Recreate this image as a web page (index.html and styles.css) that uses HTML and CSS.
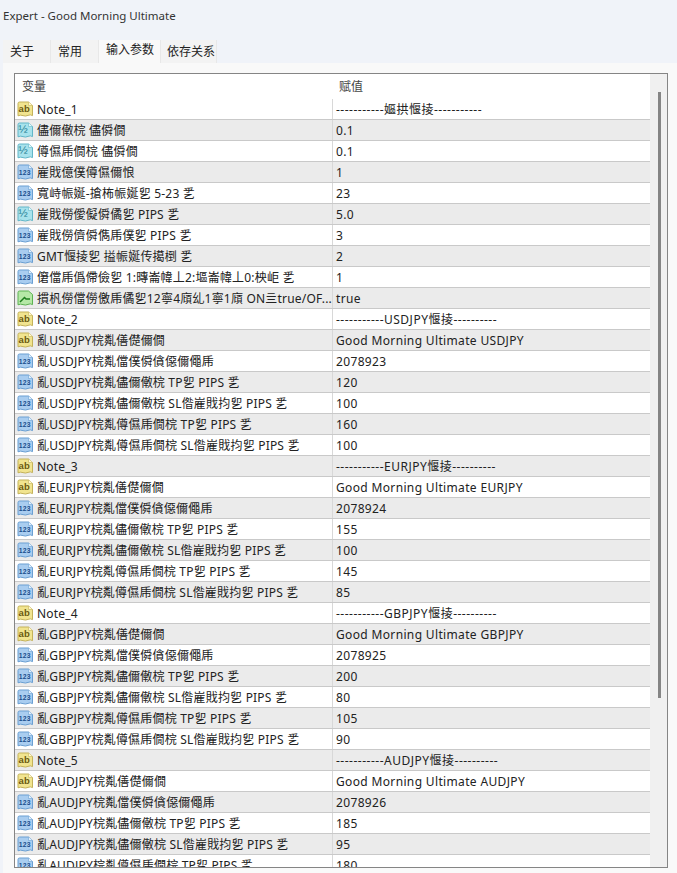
FILE: index.html
```html
<!DOCTYPE html>
<html lang="zh-CN">
<head>
<meta charset="utf-8">
<title>Expert - Good Morning Ultimate</title>
<link rel="stylesheet" href="styles.css">
</head>
<body>
<svg class="defs" width="0" height="0" aria-hidden="true">
  <defs>
    <path id="page" d="M1 2.5Q1 1 2.5 1H11.5L15.5 4.5V14.6Q13.5 13.2 11 14.4T6 14.6T1 14.8Z"/>
    <symbol id="i-ab" viewBox="0 0 17 17"><use href="#page" fill="#f1e48f" stroke="#c4b25a"/><path d="M11.5 1V4.5H15.5" fill="#fff8d0" stroke="#c4b25a" stroke-width=".6"/><text x="1.6" y="11.4" class="ic ic-ab">ab</text></symbol>
    <symbol id="i-d" viewBox="0 0 17 17"><use href="#page" fill="#a8e2ec" stroke="#62b6c8"/><path d="M11.5 1V4.5H15.5" fill="#e4f8fb" stroke="#62b6c8" stroke-width=".6"/><text x="1.6" y="11.2" class="ic ic-d">½</text></symbol>
    <symbol id="i-n" viewBox="0 0 17 17"><use href="#page" fill="#a9cdf0" stroke="#6a9fd2"/><path d="M11.5 1V4.5H15.5" fill="#e2f0fc" stroke="#6a9fd2" stroke-width=".6"/><text x="1.7" y="10.8" class="ic ic-n">123</text></symbol>
    <symbol id="i-b" viewBox="0 0 17 17"><use href="#page" fill="#b5e8a6" stroke="#5db252"/><path d="M3 12L7.5 7.5L9 9H13" fill="none" stroke="#1d7d1d" stroke-width="1.5"/></symbol>
  </defs>
</svg>
<div class="window">
  <div class="title">Expert - Good Morning Ultimate</div>
  <nav class="tabs">
    <span class="tab tab-a">关于</span>
    <span class="tab tab-b">常用</span>
    <span class="tab tab-active">输入参数</span>
    <span class="tab tab-d">依存关系</span>
  </nav>
  <main class="pane">
    <section class="table">
      <div class="grid">
        <div class="head"><span>变量</span><span>赋值</span></div>

        <div class="row"><span class="name"><svg class="icon"><use href="#i-ab"/></svg>Note_1</span><span class="val sep">-----------嫗拱愝掕-----------</span></div>
        <div class="row"><span class="name"><svg class="icon"><use href="#i-d"/></svg>儘儞僌梡 儘僢僩</span><span class="val">0.1</span></div>
        <div class="row"><span class="name"><svg class="icon"><use href="#i-d"/></svg>僔儑乕僩梡 儘僢僩</span><span class="val">0.1</span></div>
        <div class="row"><span class="name"><svg class="icon"><use href="#i-n"/></svg>嵟戝億僕僔儑儞悢</span><span class="val">1</span></div>
        <div class="row"><span class="name"><svg class="icon"><use href="#i-n"/></svg>寬峙帪娫-搶柨帪娫乮 5-23 乯</span><span class="val">23</span></div>
        <div class="row"><span class="name"><svg class="icon"><use href="#i-d"/></svg>嵟戝僗僾儗僢僪乮 PIPS 乯</span><span class="val">5.0</span></div>
        <div class="row"><span class="name"><svg class="icon"><use href="#i-n"/></svg>嵟戝僗儕僢儁乕僕乮 PIPS 乯</span><span class="val">3</span></div>
        <div class="row"><span class="name"><svg class="icon"><use href="#i-n"/></svg>GMT愝掕乮 搤帪娫传擖椡 乯</span><span class="val">2</span></div>
        <div class="row"><span class="name"><svg class="icon"><use href="#i-n"/></svg>僒儅乕僞僀儉乮 1:暷崙幃丄2:塸崙幃丄0:柍岠 乯</span><span class="val">1</span></div>
        <div class="row"><span class="name"><svg class="icon"><use href="#i-b"/></svg>摜杋僗儅僗儌乕僪乮12寧4廎乣1寧1廎 ON亖true/OF...</span><span class="val">true</span></div>

        <div class="row"><span class="name"><svg class="icon"><use href="#i-ab"/></svg>Note_2</span><span class="val sep">-----------USDJPY愝掕----------</span></div>
        <div class="row"><span class="name"><svg class="icon"><use href="#i-ab"/></svg>亂USDJPY梡亃僐儊儞僩</span><span class="val">Good Morning Ultimate USDJPY</span></div>
        <div class="row"><span class="name"><svg class="icon"><use href="#i-n"/></svg>亂USDJPY梡亃儅僕僢僋僫儞僶乕</span><span class="val">2078923</span></div>
        <div class="row"><span class="name"><svg class="icon"><use href="#i-n"/></svg>亂USDJPY梡亃儘儞僌梡 TP乮 PIPS 乯</span><span class="val">120</span></div>
        <div class="row"><span class="name"><svg class="icon"><use href="#i-n"/></svg>亂USDJPY梡亃儘儞僌梡 SL偺嵟戝抣乮 PIPS 乯</span><span class="val">100</span></div>
        <div class="row"><span class="name"><svg class="icon"><use href="#i-n"/></svg>亂USDJPY梡亃僔儑乕僩梡 TP乮 PIPS 乯</span><span class="val">160</span></div>
        <div class="row"><span class="name"><svg class="icon"><use href="#i-n"/></svg>亂USDJPY梡亃僔儑乕僩梡 SL偺嵟戝抣乮 PIPS 乯</span><span class="val">100</span></div>

        <div class="row"><span class="name"><svg class="icon"><use href="#i-ab"/></svg>Note_3</span><span class="val sep">-----------EURJPY愝掕----------</span></div>
        <div class="row"><span class="name"><svg class="icon"><use href="#i-ab"/></svg>亂EURJPY梡亃僐儊儞僩</span><span class="val">Good Morning Ultimate EURJPY</span></div>
        <div class="row"><span class="name"><svg class="icon"><use href="#i-n"/></svg>亂EURJPY梡亃儅僕僢僋僫儞僶乕</span><span class="val">2078924</span></div>
        <div class="row"><span class="name"><svg class="icon"><use href="#i-n"/></svg>亂EURJPY梡亃儘儞僌梡 TP乮 PIPS 乯</span><span class="val">155</span></div>
        <div class="row"><span class="name"><svg class="icon"><use href="#i-n"/></svg>亂EURJPY梡亃儘儞僌梡 SL偺嵟戝抣乮 PIPS 乯</span><span class="val">100</span></div>
        <div class="row"><span class="name"><svg class="icon"><use href="#i-n"/></svg>亂EURJPY梡亃僔儑乕僩梡 TP乮 PIPS 乯</span><span class="val">145</span></div>
        <div class="row"><span class="name"><svg class="icon"><use href="#i-n"/></svg>亂EURJPY梡亃僔儑乕僩梡 SL偺嵟戝抣乮 PIPS 乯</span><span class="val">85</span></div>

        <div class="row"><span class="name"><svg class="icon"><use href="#i-ab"/></svg>Note_4</span><span class="val sep">-----------GBPJPY愝掕----------</span></div>
        <div class="row"><span class="name"><svg class="icon"><use href="#i-ab"/></svg>亂GBPJPY梡亃僐儊儞僩</span><span class="val">Good Morning Ultimate GBPJPY</span></div>
        <div class="row"><span class="name"><svg class="icon"><use href="#i-n"/></svg>亂GBPJPY梡亃儅僕僢僋僫儞僶乕</span><span class="val">2078925</span></div>
        <div class="row"><span class="name"><svg class="icon"><use href="#i-n"/></svg>亂GBPJPY梡亃儘儞僌梡 TP乮 PIPS 乯</span><span class="val">200</span></div>
        <div class="row"><span class="name"><svg class="icon"><use href="#i-n"/></svg>亂GBPJPY梡亃儘儞僌梡 SL偺嵟戝抣乮 PIPS 乯</span><span class="val">80</span></div>
        <div class="row"><span class="name"><svg class="icon"><use href="#i-n"/></svg>亂GBPJPY梡亃僔儑乕僩梡 TP乮 PIPS 乯</span><span class="val">105</span></div>
        <div class="row"><span class="name"><svg class="icon"><use href="#i-n"/></svg>亂GBPJPY梡亃僔儑乕僩梡 SL偺嵟戝抣乮 PIPS 乯</span><span class="val">90</span></div>

        <div class="row"><span class="name"><svg class="icon"><use href="#i-ab"/></svg>Note_5</span><span class="val sep">-----------AUDJPY愝掕----------</span></div>
        <div class="row"><span class="name"><svg class="icon"><use href="#i-ab"/></svg>亂AUDJPY梡亃僐儊儞僩</span><span class="val">Good Morning Ultimate AUDJPY</span></div>
        <div class="row"><span class="name"><svg class="icon"><use href="#i-n"/></svg>亂AUDJPY梡亃儅僕僢僋僫儞僶乕</span><span class="val">2078926</span></div>
        <div class="row"><span class="name"><svg class="icon"><use href="#i-n"/></svg>亂AUDJPY梡亃儘儞僌梡 TP乮 PIPS 乯</span><span class="val">185</span></div>
        <div class="row"><span class="name"><svg class="icon"><use href="#i-n"/></svg>亂AUDJPY梡亃儘儞僌梡 SL偺嵟戝抣乮 PIPS 乯</span><span class="val">95</span></div>
        <div class="row"><span class="name"><svg class="icon"><use href="#i-n"/></svg>亂AUDJPY梡亃僔儑乕僩梡 TP乮 PIPS 乯</span><span class="val">180</span></div>
      </div>
      <div class="scroll"><div class="thumb"></div></div>
    </section>
  </main>
</div>
</body>
</html>
```
FILE: styles.css
```css
* { box-sizing: border-box; }
html, body { margin: 0; height: 100%; overflow: hidden; }
body {
  background: #f0f3f9;
  color: #222;
  font: 12px/1 "Noto Sans", "Noto Sans CJK SC", sans-serif;
}
.defs { position: absolute; }
.window { display: flex; flex-direction: column; height: 873px; }
.title { height: 40px; padding: 9px 0 0 3px; font-size: 11.5px; line-height: 14px; color: #333; }
.tabs { display: flex; height: 23px; padding-left: 3px; font-size: 12px; }
.tab { display: flex; align-items: center; height: 23px; background: #f3f3f3; border-right: 1px solid #e8e8e8; }
.tab-a { width: 48px; padding-left: 7px; }
.tab-b { width: 48px; padding-left: 7px; }
.tab-active { width: 62px; padding-left: 7px; background: #f9f9f9; padding-bottom: 3px; }
.tab-d { width: 56px; padding-left: 6px; }
.pane { flex: 1; margin-left: 3px; padding: 10px 9px 5px 11px; background: #f9f9f9; }
.table { display: flex; height: 795px; border: 1px solid #858585; background: #fff; overflow: hidden; }
.grid { width: 635px; flex: none; }
.head { display: grid; grid-template-columns: 318px 317px; height: 25px; align-items: center; color: #444; }
.head span { padding-left: 7px; }
.head span + span { padding-left: 6px; }
.row { display: grid; grid-template-columns: 318px 317px; height: 21px; border-bottom: 1px solid #c9c9c9; }
.row:nth-child(odd) { background: #ebebeb; }
.name, .val { display: flex; align-items: center; padding-top: 1px; white-space: nowrap; overflow: hidden; }
.name { padding-left: 2px; border-right: 1px solid #d8d8d8; letter-spacing: .2px; }
.val { padding-left: 3px; letter-spacing: .35px; }
.sep { letter-spacing: .5px; }
.icon { width: 17px; height: 17px; flex: none; margin-right: 3px; }
.ic { font-family: "Liberation Sans", sans-serif; font-weight: 700; }
.ic-ab { font-size: 9.5px; fill: #6a5a10; }
.ic-d { font-size: 11px; font-weight: 400; fill: #1f7f95; }
.ic-n { font-size: 6.8px; fill: #1a4f8c; }
.scroll { flex: 1; background: #f0f0f0; position: relative; }
.thumb { position: absolute; left: 8px; top: 18px; width: 2.5px; height: 606px; background: #858585; }
```
